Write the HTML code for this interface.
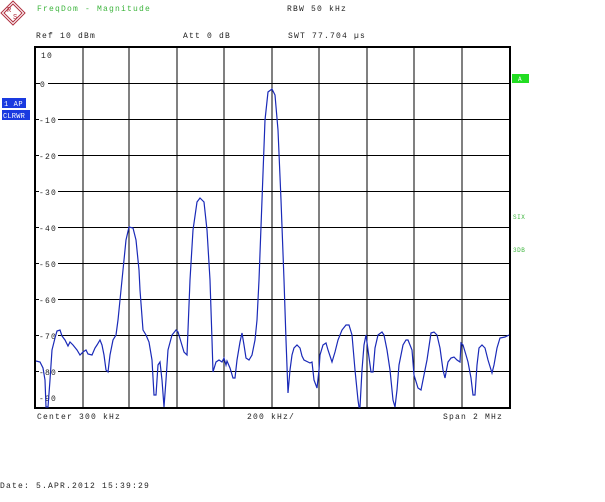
<!DOCTYPE html>
<html><head><meta charset="utf-8"><style>
html,body{margin:0;padding:0;background:#fff;width:605px;height:502px;overflow:hidden}
svg text{font-family:"Liberation Mono",monospace;font-size:8px;letter-spacing:1.2px;fill:#222}
</style></head><body>
<svg width="605" height="502" viewBox="0 0 605 502" xmlns="http://www.w3.org/2000/svg">
<g transform="translate(13,13)" fill="none" stroke="#b03040" stroke-width="1">
<polygon points="0,-12 12,0 0,12 -12,0"/>
<polygon points="0,-9 9,0 0,9 -9,0"/>
<text x="-6" y="-1" style="font-size:7px;fill:#b03040;stroke:none;letter-spacing:0">R</text>
<text x="0" y="6" style="font-size:7px;fill:#b03040;stroke:none;letter-spacing:0">S</text>
</g>
<text x="37" y="11" style="fill:#3cb43c">FreqDom - Magnitude</text>
<text x="287" y="11">RBW 50 kHz</text>
<text x="36" y="38">Ref  10 dBm</text>
<text x="183" y="38">Att  0 dB</text>
<text x="288" y="38">SWT 77.704 µs</text>
<g stroke="#000" stroke-width="1">
<line x1="83" y1="47" x2="83" y2="408"/><line x1="129" y1="47" x2="129" y2="408"/>
<line x1="177" y1="47" x2="177" y2="408"/><line x1="224" y1="47" x2="224" y2="408"/>
<line x1="272" y1="47" x2="272" y2="408"/><line x1="319" y1="47" x2="319" y2="408"/>
<line x1="367" y1="47" x2="367" y2="408"/><line x1="414" y1="47" x2="414" y2="408"/>
<line x1="462" y1="47" x2="462" y2="408"/>
<line x1="35" y1="83.5" x2="510" y2="83.5"/><line x1="35" y1="119.5" x2="510" y2="119.5"/>
<line x1="35" y1="155.5" x2="510" y2="155.5"/><line x1="35" y1="191.5" x2="510" y2="191.5"/>
<line x1="35" y1="227.5" x2="510" y2="227.5"/><line x1="35" y1="263.5" x2="510" y2="263.5"/>
<line x1="35" y1="299.5" x2="510" y2="299.5"/><line x1="35" y1="335.5" x2="510" y2="335.5"/>
<line x1="35" y1="371.5" x2="510" y2="371.5"/>
</g>
<rect x="35" y="47" width="475" height="361" fill="none" stroke="#000" stroke-width="2"/>
<g fill="#fff">
<rect x="40" y="80" width="8" height="8"/>
<rect x="39" y="116" width="19" height="8"/><rect x="39" y="152" width="19" height="8"/>
<rect x="39" y="188" width="19" height="8"/><rect x="39" y="224" width="19" height="8"/>
<rect x="39" y="260" width="19" height="8"/><rect x="39" y="296" width="19" height="8"/>
<rect x="39" y="332" width="19" height="8"/><rect x="39" y="368" width="19" height="8"/>
</g>
<g>
<text x="41" y="58">10</text>
<text x="40" y="87">0</text>
<text x="39" y="123">-10</text><text x="39" y="159">-20</text><text x="39" y="195">-30</text>
<text x="39" y="231">-40</text><text x="39" y="267">-50</text><text x="39" y="303">-60</text>
<text x="39" y="339">-70</text><text x="39" y="375">-80</text><text x="39" y="401">-90</text>
</g>
<polyline fill="none" stroke="#1a2ab8" stroke-width="1.2" points="36,361 40,362 43,368 45,380 46,407 48,407 50,380 52,350 55,338 57,331 60,330 62,336 65,340 68,346 70,342 73,345 77,350 80,355 83,352 86,350 88,354 92,355 95,348 97,345 100,340 102,345 104,355 106,370 108,372 110,355 113,340 116,335 118,320 120,300 123,270 126,240 129,227 133,228 136,240 139,270 140,290 143,330 146,335 149,342 152,360 154,395 156,395 158,365 160,362 162,380 164,407 166,380 168,350 172,335 176,330 178,332 181,342 184,352 187,355 188,330 190,280 193,230 197,202 200,198 204,202 207,230 210,280 212,340 213,372 216,362 219,360 222,362 224,358 226,365 227,361 230,368 233,378 235,378 237,360 240,342 242,333 244,345 246,358 249,360 252,355 255,340 257,320 259,280 262,200 265,120 268,92 272,89 275,95 278,130 281,200 284,280 286,340 288,393 290,370 292,355 294,348 297,345 300,348 302,356 304,360 308,362 310,363 312,362 314,380 317,388 319,370 320,355 323,345 326,343 328,350 332,362 335,352 338,340 342,330 346,325 349,325 352,335 355,370 358,400 359,407 360,407 362,370 364,345 366,335 368,350 371,372 373,372 375,348 378,335 382,332 384,335 387,350 390,370 393,400 395,407 397,390 399,365 403,345 406,340 408,340 412,350 414,375 418,388 421,390 424,375 427,360 431,333 434,332 437,335 440,348 443,370 445,378 448,362 451,358 454,357 457,360 460,362 461,343 463,345 466,355 468,362 471,378 473,395 475,395 477,365 479,348 482,345 485,348 488,360 492,373 494,365 497,348 500,338 505,337 509,335"/>
<rect x="2" y="98" width="24" height="10" fill="#1a3ae0"/>
<text x="4" y="106" style="fill:#fff;font-size:7px;letter-spacing:0.6px">1 AP</text>
<rect x="2" y="110" width="28" height="10" fill="#1a3ae0"/>
<text x="3" y="118" style="fill:#fff;font-size:7px;letter-spacing:0.2px">CLRWR</text>
<rect x="512" y="74" width="17" height="9" fill="#22dd22"/>
<text x="518" y="81" style="fill:#fff;font-size:6px">A</text>
<text x="513" y="219" style="fill:#3cb43c;font-size:6px;letter-spacing:0.5px">SIX</text>
<text x="513" y="252" style="fill:#3cb43c;font-size:6px;letter-spacing:0.5px">3DB</text>
<text x="37" y="419">Center  300 kHz</text>
<text x="247" y="419">200 kHz/</text>
<text x="443" y="419">Span  2 MHz</text>
<text x="0" y="488">Date: 5.APR.2012  15:39:29</text>
</svg>
</body></html>
